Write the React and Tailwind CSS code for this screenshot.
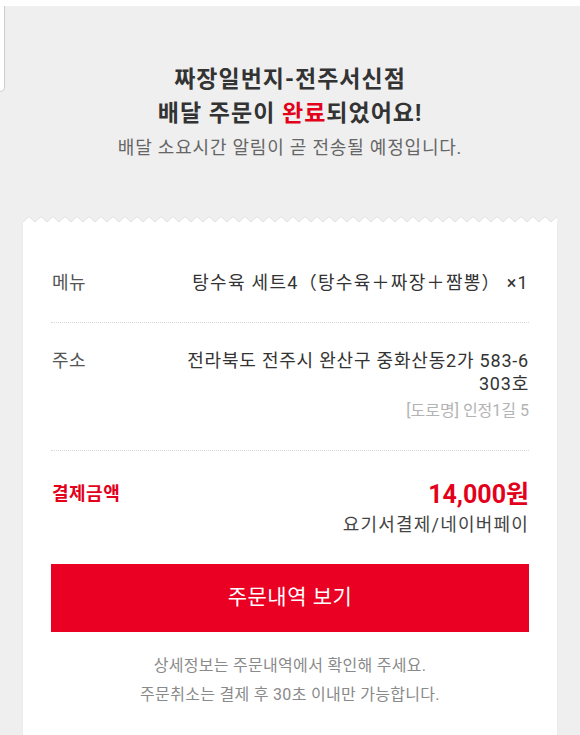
import React from "react";

const FONT = { fontFamily: 'Roboto, "Noto Sans CJK KR", "Noto Sans", sans-serif' };

function Zigzag() {
  return (
    <svg className="block w-full h-[6px]" aria-hidden="true">
      <defs>
        <pattern id="zz" width="12" height="6" patternUnits="userSpaceOnUse">
          <path d="M0 6 L6 0.6 L12 6 Z" fill="#ffffff" />
          <path d="M0 6 L6 0.6 L12 6" fill="none" stroke="#dedede" strokeWidth="0.9" />
        </pattern>
      </defs>
      <rect x="0" y="0" width="100%" height="6" fill="url(#zz)" />
    </svg>
  );
}

export default function App() {
  return (
    <div className="relative min-h-[735px] w-full bg-[#efefef] overflow-hidden" style={FONT}>
      <div className="h-[6px] bg-white" />
      <div className="absolute left-0 top-[6px] w-[5px] h-[86px] bg-white border-r border-b border-[#cccccc] rounded-br-[6px]" />

      <div className="pt-[57px] flex flex-col items-center">
        <div className="text-[23px] leading-[34px] tracking-[1px] font-bold text-[#333333]">짜장일번지-전주서신점</div>
        <div className="text-[23px] leading-[34px] tracking-[1px] font-bold text-[#333333]">
          배달 주문이 <span className="text-[#e3001b]">완료</span>되었어요!
        </div>
        <div className="mt-[5px] text-[18px] leading-[24px] tracking-[0.8px] text-[#666666]">
          배달 소요시간 알림이 곧 전송될 예정입니다.
        </div>
      </div>

      <div className="mx-[23px] mt-[56px]">
        <Zigzag />
        <div className="bg-white px-[28px] pt-[22px] pb-[40px] min-h-[520px] shadow-[0_1px_2px_rgba(0,0,0,0.06)]">
          <div className="flex justify-between items-start pt-[27px] pb-[27px] border-b border-dotted border-[#d9d9d9]">
            <div className="pl-[1px] text-[18px] leading-[24px] tracking-[0.5px] text-[#555555]">메뉴</div>
            <div className="text-[18px] leading-[24px] tracking-[1.3px] text-[#333333]">탕수육 세트4（탕수육＋짜장＋짬뽕） ×1</div>
          </div>

          <div className="flex justify-between items-start pt-[26px] pb-[28px] border-b border-dotted border-[#d9d9d9]">
            <div className="pl-[1px] text-[18px] leading-[24px] tracking-[0.5px] text-[#555555]">주소</div>
            <div className="flex flex-col items-end text-right">
              <div className="text-[18px] leading-[23px] tracking-[0.8px] text-[#333333]">전라북도 전주시 완산구 중화산동2가 583-6</div>
              <div className="text-[18px] leading-[23px] tracking-[0.8px] text-[#333333]">303호</div>
              <div className="mt-[5px] text-[16px] leading-[22px] text-[#b3b3b3]">[도로명] 인정1길 5</div>
            </div>
          </div>

          <div className="flex justify-between items-start pt-[29px]">
            <div className="pl-[1px] pt-[1px] text-[18px] leading-[26px] tracking-[0.5px] font-bold text-[#e3001b]">결제금액</div>
            <div className="flex flex-col items-end">
              <div className="text-[25px] leading-[30px] font-bold text-[#e3001b]">14,000원</div>
              <div className="mt-[3px] text-[18px] leading-[24px] tracking-[1.2px] text-[#444444]">요기서결제/네이버페이</div>
            </div>
          </div>

          <button className="mt-[27px] w-full h-[68px] bg-[#ea0022] text-white text-[21px] tracking-[0.5px] flex items-center justify-center">
            주문내역 보기
          </button>

          <div className="mt-[19px] flex flex-col items-center text-[16px] leading-[29px] tracking-[0.3px] text-[#8a8a8a]">
            <div>상세정보는 주문내역에서 확인해 주세요.</div>
            <div>주문취소는 결제 후 30초 이내만 가능합니다.</div>
          </div>
        </div>
      </div>
    </div>
  );
}
